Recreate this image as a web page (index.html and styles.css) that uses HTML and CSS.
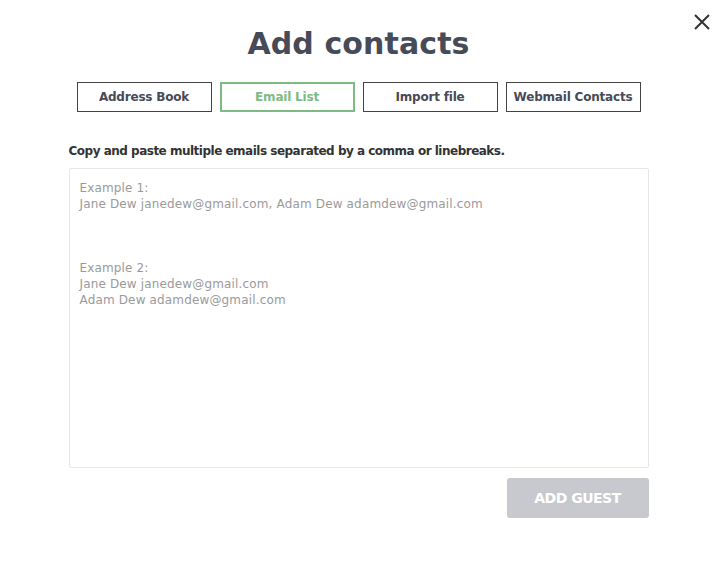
FILE: index.html
```html
<!DOCTYPE html>
<html>
<head>
<meta charset="utf-8">
<link rel="stylesheet" href="styles.css">
</head>
<body>
<div class="modal">
  <button class="close" aria-label="Close">
    <svg width="16" height="16" viewBox="0 0 16 16"><path d="M1 1L15 15M15 1L1 15" stroke="#333" stroke-width="2" fill="none"/></svg>
  </button>
  <h1 class="title">Add contacts</h1>
  <div class="tabs">
    <div class="tab">Address Book</div>
    <div class="tab active">Email List</div>
    <div class="tab">Import file</div>
    <div class="tab">Webmail Contacts</div>
  </div>
  <div class="content">
    <p class="hint">Copy and paste multiple emails separated by a comma or linebreaks.</p>
    <textarea class="emails" placeholder="Example 1:
Jane Dew janedew@gmail.com, Adam Dew adamdew@gmail.com



Example 2:
Jane Dew janedew@gmail.com
Adam Dew adamdew@gmail.com"></textarea>
    <div class="actions">
      <button class="add">ADD GUEST</button>
    </div>
  </div>
</div>
</body>
</html>
```
FILE: styles.css
```css
* { box-sizing: border-box; }
html, body { margin: 0; padding: 0; background: #fff; }
body { font-family: "DejaVu Sans", sans-serif; color: #333; }
.modal { position: relative; width: 717px; height: 572px; padding-top: 24px; }
.close { position: absolute; top: 14px; left: 694px; border: 0; background: none; padding: 0; width: 16px; height: 16px; cursor: pointer; }
.close svg { display: block; }
.title { margin: 0; text-align: center; font-size: 30px; font-weight: 700; color: #474a57; line-height: 40px; letter-spacing: 0.1px; }
.tabs { display: flex; justify-content: center; gap: 8px; margin-top: 18px; }
.tab { width: 135px; height: 30px; border: 1px solid #444; display: flex; align-items: center; justify-content: center; font-size: 12px; font-weight: 700; color: #474a57; letter-spacing: -0.2px; }
.tab.active { border: 2px solid #7dbb82; color: #7dbb82; }
.content { width: 580px; margin: 0 auto; padding-top: 31px; }
.hint { margin: 0 0 9px; font-size: 12px; font-weight: 700; color: #333; line-height: 16px; letter-spacing: -0.5px; }
.emails { display: block; width: 580px; height: 300px; border: 1px solid #e6e6e6; border-radius: 2px; padding: 11px 10px; font-family: inherit; font-size: 12px; line-height: 16px; letter-spacing: 0.15px; resize: none; outline: none; }
.emails::placeholder { color: #9a9a9a; opacity: 1; }
.actions { display: flex; justify-content: flex-end; margin-top: 10px; }
.add { width: 142px; height: 40px; border: 0; border-radius: 3px; background: #c8c9ce; color: #fff; font-family: inherit; font-size: 14px; font-weight: 700; letter-spacing: -0.5px; }
```
